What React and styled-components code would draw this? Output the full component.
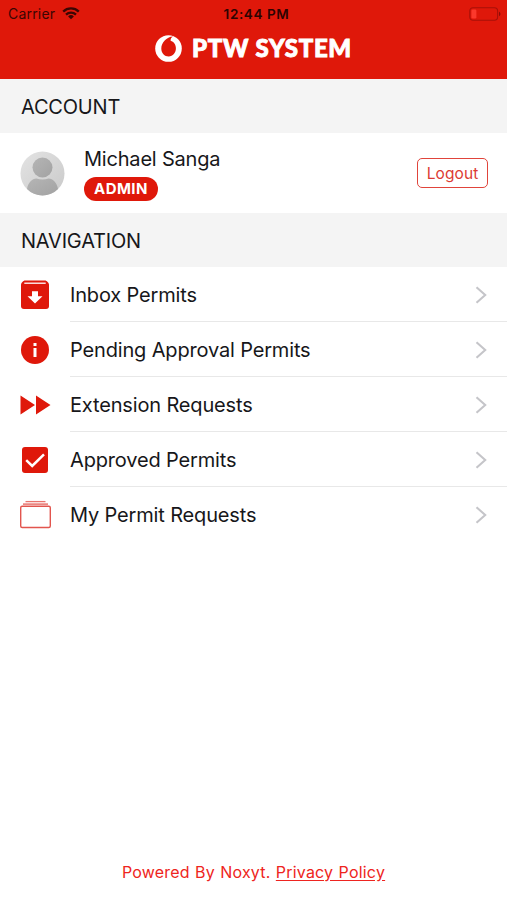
import styled, { createGlobalStyle } from 'styled-components'

const GlobalStyle = createGlobalStyle`
  :root {
    --red: #df180a;
    --black: #17171a;
    --gray: #f4f4f4;
  }

  * {
    box-sizing: border-box;
  }

  body {
    margin: 0;
    background: #fff;
    color: var(--black);
    font-family: Inter, 'Liberation Sans', sans-serif;
  }
`

const Screen = styled.div`
  display: flex;
  flex-direction: column;
  height: 900px;
  overflow: hidden;

  svg {
    display: block;
    flex-shrink: 0;
  }
`

const Header = styled.header`
  height: 79px;
  background: var(--red);
`

const StatusBar = styled.div`
  display: grid;
  grid-template-columns: 1fr auto 1fr;
  align-items: center;
  height: 27px;
  padding: 0 6px 0 8px;
  color: #3b0603;
  font-size: 14px;

  .carrier {
    display: flex;
    align-items: center;
    gap: 7px;
    letter-spacing: .2px;
  }

  .time {
    padding-left: 4px;
    color: #2c0402;
    font-size: 13.5px;
    font-weight: 600;
    letter-spacing: .6px;
  }

  .battery {
    justify-self: end;
  }
`

const Brand = styled.div`
  display: flex;
  justify-content: center;
  align-items: center;
  gap: 10px;
  height: 42px;
  color: #fff;

  .name {
    margin: 0;
    font: 900 24px/42px Lato, sans-serif;
    letter-spacing: .7px;
    white-space: nowrap;
    -webkit-text-stroke: .9px #fff;
  }
`

const SectionTitle = styled.h2`
  height: 54px;
  margin: 0;
  padding: 1px 0 0 21px;
  background: var(--gray);
  font-size: 20px;
  font-weight: 400;
  line-height: 54px;
  letter-spacing: -.2px;
`

const AccountStyled = styled.section`
  display: flex;
  align-items: center;
  height: 80px;
  padding: 0 19px 0 20px;

  .details {
    display: flex;
    flex-direction: column;
    align-items: flex-start;
    gap: 5px;
    flex: 1;
    margin-left: 19px;
  }

  .name {
    font-size: 20px;
    line-height: 26px;
    letter-spacing: -.2px;
  }
`

const Badge = styled.span`
  height: 24px;
  padding: 0 10px;
  border-radius: 12px;
  background: var(--red);
  color: #fff;
  font-size: 15px;
  font-weight: 700;
  line-height: 24px;
  letter-spacing: .45px;
`

const LogoutButton = styled.button`
  width: 71px;
  height: 30px;
  padding: 0;
  border: 1.5px solid #e0443b;
  border-radius: 5px;
  background: #fff;
  color: #dc3b32;
  font: 400 15.5px Inter, sans-serif;
  letter-spacing: .1px;
`

const NavList = styled.nav`
  display: flex;
  flex-direction: column;
`

const NavRow = styled.div`
  display: flex;
  align-items: center;
  height: 55px;
  padding-left: 19px;

  .label {
    display: flex;
    align-items: center;
    justify-content: space-between;
    flex: 1;
    height: 55px;
    margin-left: 19px;
    padding: 2px 20px 0 0;
    border-bottom: 1px solid #e8e8e8;
    font-size: 20px;
    letter-spacing: -.16px;
  }

  &:last-child .label {
    border-color: transparent;
  }
`

const Footer = styled.footer`
  margin-top: auto;
  height: 56px;
  color: #ee2420;
  font-size: 16px;
  line-height: 56px;
  letter-spacing: .2px;
  word-spacing: .6px;
  text-align: center;

  a {
    color: inherit;
    text-underline-offset: 2px;
  }
`

const WifiIcon = () => (
  <svg width="18" height="13" viewBox="0 0 18 13" fill="none" stroke="currentColor" strokeWidth="2.3">
    <path d="M1.2 4.6a11.2 11.2 0 0 1 15.6 0M4 7.6a7.2 7.2 0 0 1 10 0" />
    <path d="M9 12.3 6.1 9.5a4.1 4.1 0 0 1 5.8 0z" fill="currentColor" stroke="none" />
  </svg>
)

const BatteryIcon = () => (
  <svg className="battery" width="32" height="14" viewBox="0 0 32 14">
    <rect x=".8" y=".8" width="27.8" height="12.4" rx="3.2" fill="none" stroke="#a81009" strokeWidth="1.1" />
    <rect x="2.4" y="2.4" width="5" height="9.2" rx="1.4" fill="#fb392c" />
    <path d="M30 4.8c1.9.7 1.9 3.7 0 4.4z" fill="#8c0c06" />
  </svg>
)

const Logo = () => (
  <svg width="27" height="27" viewBox="0 0 27 27">
    <circle cx="13.5" cy="13.5" r="13.3" fill="#fff" />
    <path
      d="M18 1.400c-1.500.700-2.500 2-2.400 4.400 3.200 1 5.300 3.900 5.300 7.500 0 4.600-3 8.100-7.200 8.100s-7.400-3.300-7.400-8C6.300 7.600 11.500 1.700 18 1.400z"
      fill="#df180a"
    />
  </svg>
)

const Avatar = () => (
  <svg width="45" height="45" viewBox="0 0 45 45">
    <defs>
      <linearGradient id="disc" x1="0" y1="0" x2="1" y2="1">
        <stop offset="0" stopColor="#e4e4e4" />
        <stop offset="1" stopColor="#c9c9c9" />
      </linearGradient>
      <linearGradient id="person" x1="0" y1="0" x2="1" y2="1">
        <stop offset="0" stopColor="#b5b5b5" />
        <stop offset="1" stopColor="#a2a2a2" />
      </linearGradient>
      <clipPath id="round">
        <circle cx="22.5" cy="22.5" r="22" />
      </clipPath>
    </defs>
    <g clipPath="url(#round)">
      <rect width="45" height="45" fill="url(#disc)" />
      <circle cx="22.5" cy="16.5" r="10" fill="url(#person)" />
      <path d="M7 45v-7c1-6 5-10.500 9.500-10.500 3.500 1.300 8.500 1.300 12 0C33 27.500 37 32 38 38v7z" fill="url(#person)" />
    </g>
  </svg>
)

const Chevron = () => (
  <svg width="12" height="18" viewBox="0 0 12 18" fill="none" stroke="#c5c5c9" strokeWidth="2.1">
    <path d="m1.500 1.300 8.700 7.700-8.700 7.700" />
  </svg>
)

const icons = {
  inbox: (
    <>
      <path d="M6 1.500h20c1.500 0 4 2.500 4 4V27a3 3 0 0 1-3 3H5a3 3 0 0 1-3-3V5.500c0-1.500 2.500-4 4-4z" fill="#df180a" />
      <path d="M5.300 4.200h21.400" stroke="#fff" strokeWidth="1.300" />
      <path d="M13 12.300h6v4.900h4.500L16 24.500 8.500 17.200H13z" fill="#fff" />
    </>
  ),
  info: (
    <>
      <circle cx="16" cy="16" r="14" fill="#df180a" />
      <path d="M14.500 9h3v3h-3zM14.500 14h3v9h-3z" fill="#fff" />
    </>
  ),
  forward: <path d="M1.500 6.500 16 16 1.500 25.500zM17 6.500 31.500 16 17 25.500z" fill="#df180a" />,
  check: (
    <>
      <rect x="3" y="3" width="26" height="26" rx="3" fill="#df180a" />
      <path d="m7.200 16.200 6 5.800L25 10.300" fill="none" stroke="#fff" strokeWidth="2.500" />
    </>
  ),
  folder: (
    <>
      <rect x="1.700" y="7.200" width="29.600" height="21.300" rx="1.500" fill="none" stroke="#e2554e" strokeWidth="1.400" />
      <path d="M4 5.100h25" stroke="#e8736d" strokeWidth="1.500" />
      <path d="M6.500 2.600h20" stroke="#e8736d" strokeWidth="1.300" />
    </>
  ),
}

const links = [
  { icon: 'inbox', label: 'Inbox Permits' },
  { icon: 'info', label: 'Pending Approval Permits' },
  { icon: 'forward', label: 'Extension Requests' },
  { icon: 'check', label: 'Approved Permits' },
  { icon: 'folder', label: 'My Permit Requests' },
]

function NavItem({ icon, label }) {
  return (
    <NavRow>
      <svg width="32" height="32" viewBox="0 0 32 32">{icons[icon]}</svg>
      <div className="label">
        <span>{label}</span>
        <Chevron />
      </div>
    </NavRow>
  )
}

function App() {
  return (
    <Screen>
      <GlobalStyle />
      <Header>
        <StatusBar>
          <div className="carrier">
            <span>Carrier</span>
            <WifiIcon />
          </div>
          <span className="time">12:44 PM</span>
          <BatteryIcon />
        </StatusBar>
        <Brand>
          <Logo />
          <h1 className="name">PTW SYSTEM</h1>
        </Brand>
      </Header>
      <SectionTitle>ACCOUNT</SectionTitle>
      <AccountStyled>
        <Avatar />
        <div className="details">
          <span className="name">Michael Sanga</span>
          <Badge>ADMIN</Badge>
        </div>
        <LogoutButton>Logout</LogoutButton>
      </AccountStyled>
      <SectionTitle>NAVIGATION</SectionTitle>
      <NavList>
        {links.map((link) => (
          <NavItem key={link.icon} {...link} />
        ))}
      </NavList>
      <Footer>
        Powered By Noxyt. <a href="#privacy">Privacy Policy</a>
      </Footer>
    </Screen>
  )
}

export default App
